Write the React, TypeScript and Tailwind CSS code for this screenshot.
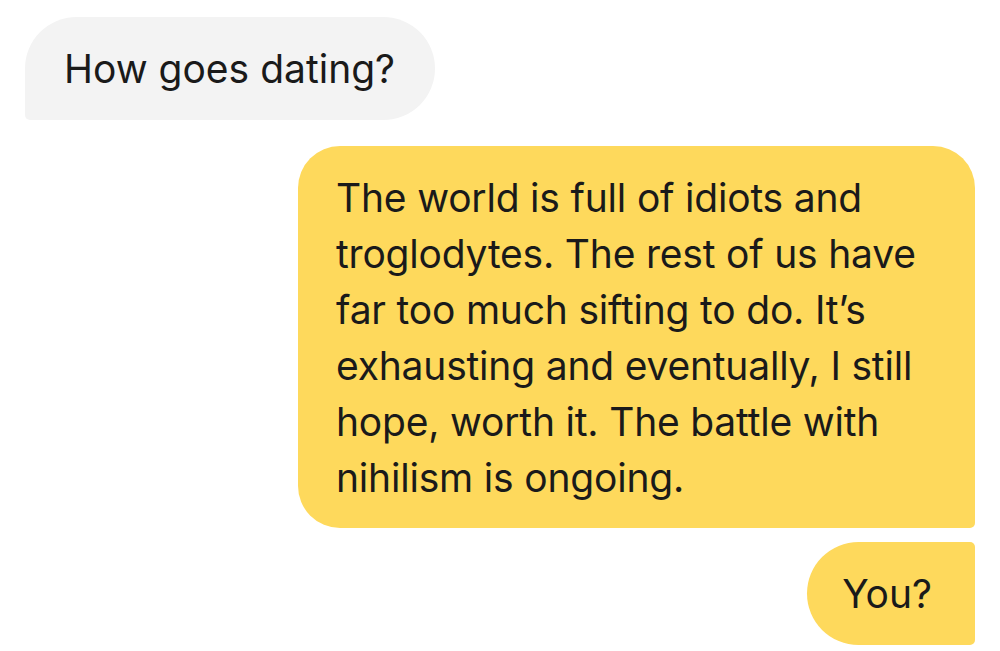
import React from 'react'

const lines = [
  'The world is full of idiots and',
  'troglodytes. The rest of us have',
  'far too much sifting to do. It\u2019s',
  'exhausting and eventually, I still',
  'hope, worth it. The battle with',
  'nihilism is ongoing.',
]

export default function App() {
  return (
    <div
      className="w-[1000px] h-[651px] bg-white overflow-hidden px-[25px] pt-[17px] flex flex-col text-[#1a1a1a]"
      style={{ fontFamily: 'Inter, "Noto Sans", sans-serif' }}
    >
      {/* Incoming */}
      <div className="self-start h-[103px] shrink-0 flex items-center bg-[#f3f3f3] rounded-[52px] rounded-bl-[5px] pl-[39px] pr-[40px] text-[39px] leading-none">
        How goes dating?
      </div>

      {/* Outgoing group */}
      <div className="self-end shrink-0 mt-[26px] w-[677px] bg-[#fed95c] rounded-[42px] rounded-br-[5px] pl-[38px] pr-[30px] pt-[24px] pb-[22px] text-[39px] leading-[56px] tracking-[-0.2px]">
        {lines.map((l) => (
          <div key={l} className="whitespace-nowrap">{l}</div>
        ))}
      </div>

      <div className="self-end shrink-0 mt-[14px] h-[103px] flex items-center bg-[#fed95c] rounded-l-[52px] rounded-r-[5px] pl-[35px] pr-[43px] text-[39px] leading-none">
        You?
      </div>
    </div>
  )
}
